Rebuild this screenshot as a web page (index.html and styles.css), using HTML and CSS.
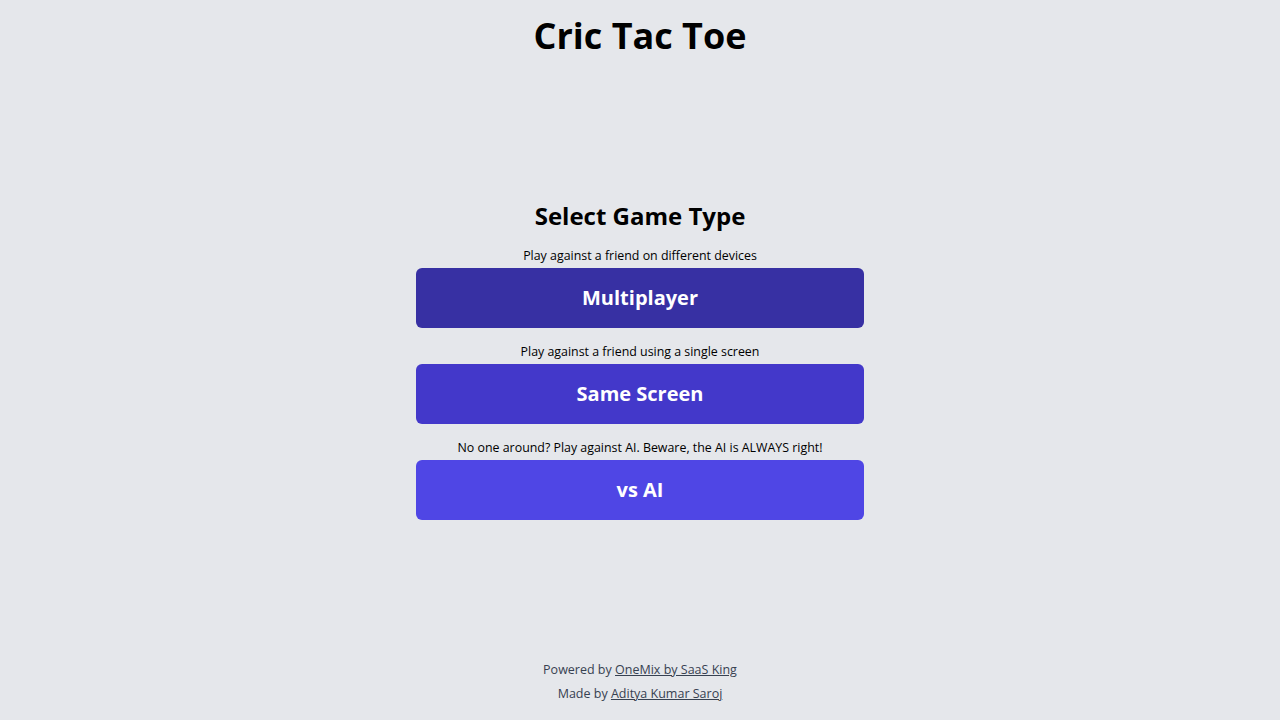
FILE: index.html
```html
<!DOCTYPE html>
<html lang="en">
<head>
<meta charset="utf-8">
<title>Cric Tac Toe</title>
<link rel="stylesheet" href="styles.css">
</head>
<body>
<div class="page">
  <header class="header">
    <h1 class="title">Cric Tac Toe</h1>
  </header>
  <main class="main">
    <div class="panel">
      <h2 class="subtitle">Select Game Type</h2>
      <p class="desc">Play against a friend on different devices</p>
      <button class="btn btn-multi">Multiplayer</button>
      <p class="desc">Play against a friend using a single screen</p>
      <button class="btn btn-same">Same Screen</button>
      <p class="desc">No one around? Play against AI. Beware, the AI is ALWAYS right!</p>
      <button class="btn btn-ai">vs AI</button>
    </div>
  </main>
  <footer class="footer">
    <p class="foot-line">Powered by <a href="#">OneMix by SaaS King</a></p>
    <p class="foot-line">Made by <a href="#">Aditya Kumar Saroj</a></p>
  </footer>
</div>
</body>
</html>
```

FILE: styles.css
```css
* { box-sizing: border-box; }
html, body { margin: 0; padding: 0; }
body {
  background: #e5e7eb;
  color: #000;
  font-family: "Open Sans", "Noto Sans", sans-serif;
}
.page {
  min-height: 720px;
  display: grid;
  grid-template-rows: auto 1fr auto;
}
.header {
  padding: 16px 16px 24px;
  text-align: center;
}
.title {
  margin: 0;
  font-size: 36px;
  line-height: 40px;
  font-weight: 700;
}
.main {
  display: flex;
  align-items: center;
  justify-content: center;
}
.panel {
  width: 448px;
  display: flex;
  flex-direction: column;
  align-items: stretch;
  text-align: center;
}
.subtitle {
  margin: 0 0 16px;
  font-size: 24px;
  line-height: 32px;
  font-weight: 700;
}
.desc {
  margin: 0 0 4px;
  font-size: 12.4px;
  line-height: 16px;
}
.btn {
  height: 60px;
  margin: 0 0 16px;
  border: 0;
  border-radius: 6px;
  padding: 0 0 2px;
  color: #fff;
  font-family: inherit;
  font-size: 20px;
  font-weight: 700;
  cursor: pointer;
}
.btn:last-child { margin-bottom: 0; }
.btn-multi { background: #3730a3; }
.btn-same { background: #4338ca; }
.btn-ai { background: #4f46e5; }
.footer {
  padding: 18px 16px 14px;
  text-align: center;
  color: #374151;
}
.foot-line {
  margin: 0;
  font-size: 12.5px;
  line-height: 24px;
}
.foot-line a { color: inherit; text-decoration: underline; }
```
